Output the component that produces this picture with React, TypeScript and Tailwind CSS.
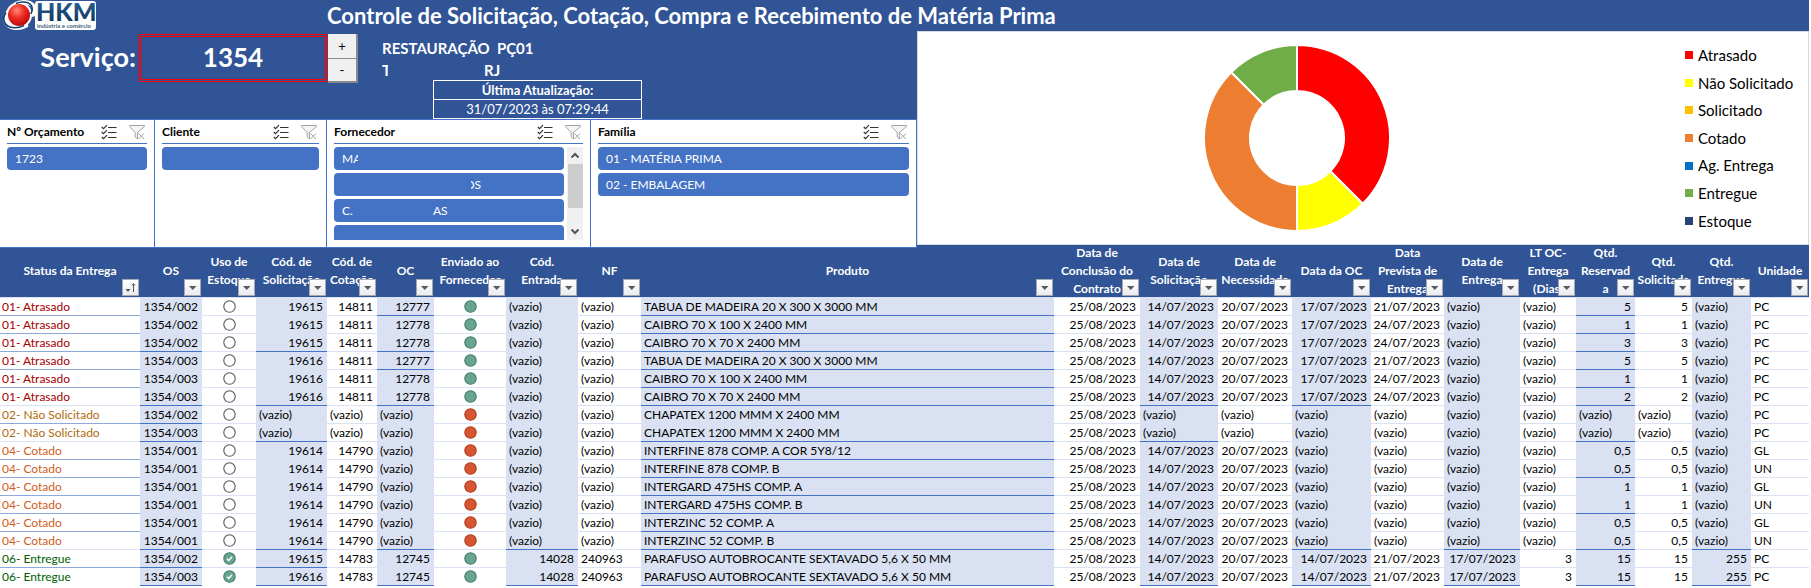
import type { ReactNode } from "react";

type Column = { label: string; width: string; shaded?: boolean; text?: boolean };

const columns: Column[] = [
  { label: "Status da Entrega", width: "w-[140px]" },
  { label: "OS", width: "w-[62px]", shaded: true },
  { label: "Uso de Estoque", width: "w-[54px]" },
  { label: "Cód. de Solicitação", width: "w-[71px]", shaded: true },
  { label: "Cód. de Cotação", width: "w-[50px]" },
  { label: "OC", width: "w-[57px]", shaded: true },
  { label: "Enviado ao Fornecedor", width: "w-[72px]" },
  { label: "Cód. Entrada", width: "w-[72px]", shaded: true },
  { label: "NF", width: "w-[63px]", text: true },
  { label: "Produto", width: "", shaded: true, text: true },
  { label: "Data de Conclusão do Contrato", width: "w-[86px]" },
  { label: "Data de Solicitação", width: "w-[78px]", shaded: true },
  { label: "Data de Necessidade", width: "w-[74px]" },
  { label: "Data da OC", width: "w-[79px]", shaded: true },
  { label: "Data Prevista de Entrega", width: "w-[73px]" },
  { label: "Data de Entrega", width: "w-[76px]", shaded: true },
  { label: "LT OC-Entrega (Dias)", width: "w-[56px]" },
  { label: "Qtd. Reservada", width: "w-[59px]", shaded: true },
  { label: "Qtd. Solicitada", width: "w-[57px]" },
  { label: "Qtd. Entregue", width: "w-[59px]", shaded: true },
  { label: "Unidade", width: "w-[58px]", text: true },
];

const headerLines: Record<number, string[]> = {
  2: ["Uso de", "Estoque"],
  3: ["Cód. de", "Solicitação"],
  4: ["Cód. de", "Cotação"],
  6: ["Enviado ao", "Fornecedor"],
  7: ["Cód.", "Entrada"],
  10: ["Data de", "Conclusão do", "Contrato"],
  11: ["Data de", "Solicitação"],
  12: ["Data de", "Necessidade"],
  14: ["Data", "Prevista de", "Entrega"],
  15: ["Data de", "Entrega"],
  16: ["LT OC-", "Entrega", "(Dias)"],
  17: ["Qtd.", "Reservad", "a"],
  18: ["Qtd.", "Solicitada"],
  19: ["Qtd.", "Entregue"],
};

const V = "(vazio)";
const late = (os: string, sol: string, oc: string, product: string, due: string, qty: string) => [
  "01- Atrasado", os, "empty", sol, "14811", oc, "green", V, V, product,
  "25/08/2023", "14/07/2023", "20/07/2023", "17/07/2023", due, V, V, qty, qty, V, "PC",
];
const pending = (os: string) => [
  "02- Não Solicitado", os, "empty", V, V, V, "red", V, V, "CHAPATEX 1200 MMM X 2400 MM",
  "25/08/2023", V, V, V, V, V, V, V, V, V, "PC",
];
const quoted = (product: string, qty: string, unit: string) => [
  "04- Cotado", "1354/001", "empty", "19614", "14790", V, "red", V, V, product,
  "25/08/2023", "14/07/2023", "20/07/2023", V, V, V, V, qty, qty, V, unit,
];
const delivered = (os: string, sol: string) => [
  "06- Entregue", os, "check", sol, "14783", "12745", "green", "14028", "240963",
  "PARAFUSO AUTOBROCANTE SEXTAVADO 5,6 X 50 MM",
  "25/08/2023", "14/07/2023", "20/07/2023", "14/07/2023", "21/07/2023", "17/07/2023", "3", "15", "15", "255", "PC",
];

const rows = [
  late("1354/002", "19615", "12777", "TABUA DE MADEIRA 20 X 300 X 3000 MM", "21/07/2023", "5"),
  late("1354/002", "19615", "12778", "CAIBRO 70 X 100 X 2400 MM", "24/07/2023", "1"),
  late("1354/002", "19615", "12778", "CAIBRO 70 X 70 X 2400 MM", "24/07/2023", "3"),
  late("1354/003", "19616", "12777", "TABUA DE MADEIRA 20 X 300 X 3000 MM", "21/07/2023", "5"),
  late("1354/003", "19616", "12778", "CAIBRO 70 X 100 X 2400 MM", "24/07/2023", "1"),
  late("1354/003", "19616", "12778", "CAIBRO 70 X 70 X 2400 MM", "24/07/2023", "2"),
  pending("1354/002"),
  pending("1354/003"),
  quoted("INTERFINE 878 COMP. A COR 5Y8/12", "0,5", "GL"),
  quoted("INTERFINE 878 COMP. B", "0,5", "UN"),
  quoted("INTERGARD 475HS COMP. A", "1", "GL"),
  quoted("INTERGARD 475HS COMP. B", "1", "UN"),
  quoted("INTERZINC 52 COMP. A", "0,5", "GL"),
  quoted("INTERZINC 52 COMP. B", "0,5", "UN"),
  delivered("1354/002", "19615"),
  delivered("1354/003", "19616"),
];

const statusColors: Record<string, string> = {
  "01": "text-[#a50000]",
  "02": "text-[#b06a10]",
  "04": "text-[#d0601c]",
  "06": "text-[#006100]",
};

function StatusDot({ kind }: { kind: string }) {
  const fill = kind === "green" || kind === "check" ? "#68a490" : kind === "red" ? "#d65532" : "#fff";
  const stroke = kind === "green" || kind === "check" ? "#3f7f69" : kind === "red" ? "#b03c1c" : "#5a5a5a";
  return (
    <svg viewBox="0 0 13 13" className="mx-auto block size-[13px]" role="img" aria-label={kind}>
      <circle cx="6.5" cy="6.5" r="5.7" fill={fill} stroke={stroke} strokeWidth="1.1" />
      {kind === "check" && <path d="M4 6.7 5.8 8.4 9 4.8" fill="none" stroke="#fff" strokeWidth="1.4" />}
    </svg>
  );
}

function FilterButton({ label, sorted }: { label: string; sorted?: boolean }) {
  return (
    <button
      type="button"
      aria-label={`Filtrar ${label}`}
      className="absolute right-px bottom-px flex size-[17px] items-center justify-center border border-[#a6a9b0] bg-gradient-to-b from-white to-[#e9ebf0]"
    >
      {sorted ? (
        <svg viewBox="0 0 15 15" className="size-[15px] shrink-0">
          <path d="M2.500 9h5l-2.500 3z" fill="#555" />
          <path d="M10.500 12V4M9 5.500l1.500-2 1.500 2" stroke="#555" fill="none" />
        </svg>
      ) : (
        <svg viewBox="0 0 15 15" className="size-[15px] shrink-0">
          <path d="M4 6h7.500L7.750 10z" fill="#5a5a5a" />
        </svg>
      )}
    </button>
  );
}

function Slicer({ title, className, children }: { title: string; className: string; children?: ReactNode }) {
  return (
    <section className={`flex flex-col border-t border-r border-[#4472c4] bg-white pr-[7px] pl-[7px] ${className}`}>
      <header className="flex h-[24px] items-center border-b border-[#4472c4]">
        <h2 className="flex-1 text-[12px] font-bold text-black">{title}</h2>
        <button type="button" aria-label={`Seleção múltipla: ${title}`}>
          <svg viewBox="0 0 16 16" className="size-4" fill="none" stroke="#333" strokeWidth="1.2">
            <path d="M.8 3l1.700 1.700L6 1.200M.8 8l1.700 1.700L6 6.200M.8 13l1.700 1.700L6 11.200M7 3.500h8.500M7 8.500h8.500M7 13.500h8.500" />
          </svg>
        </button>
        <button type="button" aria-label={`Limpar filtro: ${title}`} className="ml-3 mr-[2px]">
          <svg viewBox="0 0 16 16" className="size-4" fill="none" stroke="#a3a3a3">
            <path d="M.5 1.500h15L10 8H6z" fill="#f2f2f2" stroke="none" />
            <path d="M15.500 1.500H.5v1.200L6.200 8.500V13l2.300 2V8.500L15.500 2.500z" fill="#f4f4f4" />
            <path d="M9.500 9.500l5.500 5.500M15 9.500L9.500 15" />
          </svg>
        </button>
      </header>
      {children}
    </section>
  );
}

function SlicerItem({ children, label }: { children?: ReactNode; label?: string }) {
  return (
    <button
      type="button"
      aria-label={label}
      className="flex h-[23px] w-full shrink-0 items-center rounded bg-[#4472c4] px-2 text-left text-[12px] text-white"
    >
      {children}
    </button>
  );
}

const chart = [
  { name: "Atrasado", value: 6, color: "#ff0000" },
  { name: "Não Solicitado", value: 2, color: "#ffff00" },
  { name: "Solicitado", value: 0, color: "#ffc000" },
  { name: "Cotado", value: 6, color: "#ed7d31" },
  { name: "Ag. Entrega", value: 0, color: "#0070c0" },
  { name: "Entregue", value: 2, color: "#70ad47" },
  { name: "Estoque", value: 0, color: "#264478" },
];

function Donut() {
  const total = chart.reduce((sum, s) => sum + s.value, 0);
  let angle = 0;
  const at = (r: number, a: number) => `${94 + r * Math.sin(a)} ${94 - r * Math.cos(a)}`;
  return (
    <svg viewBox="0 0 188 188" className="size-[188px]" role="img" aria-label="Distribuição por status">
      {chart
        .filter((s) => s.value > 0)
        .map((s) => {
          const start = angle;
          angle += (s.value / total) * Math.PI * 2;
          return (
            <path
              key={s.name}
              d={`M${at(93, start)}A93 93 0 0 1 ${at(93, angle)}L${at(47, angle)}A47 47 0 0 0 ${at(47, start)}Z`}
              fill={s.color}
              stroke="#fff"
              strokeWidth="2"
            />
          );
        })}
    </svg>
  );
}

function Logo() {
  return (
    <svg viewBox="0 0 96 32" className="h-8 w-24 overflow-visible" role="img" aria-label="HKM indústria e comércio">
      <defs>
        <radialGradient id="ball" cx="40%" cy="30%" r="70%">
          <stop offset="0" stopColor="#ff8a78" />
          <stop offset="0.500" stopColor="#ee2a20" />
          <stop offset="1" stopColor="#b80d0d" />
        </radialGradient>
        <linearGradient id="ink" x1="0" y1="0" x2="0" y2="1">
          <stop offset="0" stopColor="#2d6da3" />
          <stop offset="1" stopColor="#0b2c52" />
        </linearGradient>
      </defs>
      <path d="M6 12.500C1.500 18 3 25 10 27c5 1.500 10 .5 14-1.500M14 4c7-3 16-2 18 3.500 1 3 0 5-1 7" fill="none" stroke="#fff" strokeWidth="4.500" strokeLinecap="round" />
      <rect x="33" y="1" width="61" height="29" rx="3" fill="#fff" />
      <circle cx="17" cy="15" r="13" fill="#fff" />
      <path d="M4 12.500C0 18 1.500 25 8 27c5 1.500 10 .5 14-1.500M14 3.500c7-3 14-1.500 16 3.500 1 3 0 5-1 7" fill="none" stroke="#173f6b" strokeWidth="1.600" />
      <circle cx="17" cy="15" r="11" fill="url(#ball)" />
      <text x="34" y="21" fontSize="25" fontWeight="900" fill="url(#ink)" fontFamily="Lato, sans-serif">HKM</text>
      <text x="35" y="28" fontSize="6" fontWeight="700" fill="#46627f" fontFamily="Lato, sans-serif">indústria e comércio</text>
    </svg>
  );
}

export default function App() {
  return (
    <main className="bg-white pr-[2px] pb-[2px] font-['Lato',sans-serif] text-black">
      <header className="flex h-[31px] items-center bg-[#305496]">
        <div className="w-[327px] pl-[2px]">
          <Logo />
        </div>
        <h1 className="text-[22px] leading-[30px] font-bold whitespace-nowrap text-white">
          Controle de Solicitação, Cotação, Compra e Recebimento de Matéria Prima
        </h1>
      </header>

      <div className="flex bg-[#305496]">
        <div className="w-[917px] shrink-0">
          <div className="flex h-[88px] items-start pt-[3px] text-white">
            <label htmlFor="service" className="w-[139px] pr-[3px] text-right text-[27px] leading-[46px] font-bold">
              Serviço:
            </label>
            <input
              id="service"
              defaultValue="1354"
              className="h-[48px] w-[188px] border-3 border-double border-[#ff0000] bg-transparent pb-[2px] text-center text-[26px] font-bold"
            />
            <div className="ml-px flex w-[30px] flex-col text-[13px] leading-4 text-black">
              <button type="button" className="h-[25px] border-r-2 border-b border-[#8a8a8a] bg-[#f0f0f0]">+</button>
              <button type="button" className="h-[24px] border-r-2 border-b-2 border-[#8a8a8a] bg-[#f0f0f0]">-</button>
            </div>
            <div className="pl-6 text-[15px] font-bold">
              <p className="pt-[3px] leading-[22px] whitespace-pre">RESTAURAÇÃO  PÇ01</p>
              <p className="flex gap-[96px] leading-[22px]">
                <span className="w-[6px] overflow-hidden">T</span>
                <span>RJ</span>
              </p>
              <dl className="ml-[51px] -mt-px w-[209px] border border-white text-center text-[13px] leading-[18px]">
                <dt className="border-b border-white">Última Atualização:</dt>
                <dd className="font-normal">31/07/2023 às 07:29:44</dd>
              </dl>
            </div>
          </div>

          <div className="flex h-[129px] border-b border-[#4472c4] bg-white">
            <Slicer title="Nº Orçamento" className="w-[155px]">
              <div className="pt-[3px]">
                <SlicerItem>1723</SlicerItem>
              </div>
            </Slicer>
            <Slicer title="Cliente" className="w-[172px]">
              <div className="pt-[3px]">
                <SlicerItem label="Cliente selecionado" />
              </div>
            </Slicer>
            <Slicer title="Fornecedor" className="w-[264px]">
              <div className="mt-[3px] flex h-[93px] gap-[3px] overflow-hidden">
                <div className="flex flex-1 flex-col gap-[3px]">
                  <SlicerItem>
                    <span className="w-4 overflow-hidden">MA</span>
                  </SlicerItem>
                  <SlicerItem label="Fornecedor 2">
                    <span className="ml-[129px] flex w-[10px] justify-end overflow-hidden">OS</span>
                  </SlicerItem>
                  <SlicerItem>
                    <span className="w-[91px]">C.</span>
                    <span>AS</span>
                  </SlicerItem>
                  <SlicerItem label="Fornecedor 4" />
                </div>
                <div className="flex w-4 flex-col items-center justify-between bg-[#f0f0f0]">
                  <svg viewBox="0 0 16 17" className="h-[17px] w-4">
                    <path d="M4.500 10.500L8 7l3.500 3.500" fill="none" stroke="#555" strokeWidth="2" />
                  </svg>
                  <div className="mb-auto h-[44px] w-[15px] bg-[#cdcdcd]" />
                  <svg viewBox="0 0 16 17" className="h-[17px] w-4">
                    <path d="M4.500 6.500L8 10l3.500-3.500" fill="none" stroke="#555" strokeWidth="2" />
                  </svg>
                </div>
              </div>
            </Slicer>
            <Slicer title="Família" className="flex-1">
              <div className="flex flex-col gap-[3px] pt-[3px]">
                <SlicerItem>01 - MATÉRIA PRIMA</SlicerItem>
                <SlicerItem>02 - EMBALAGEM</SlicerItem>
              </div>
            </Slicer>
          </div>
        </div>

        <section className="mb-[3px] flex flex-1 items-center justify-between border border-[#d9d9d9] bg-white">
          <div className="flex flex-1 justify-center pr-[9px]">
            <Donut />
          </div>
          <ul className="flex h-[193px] w-[123px] flex-col text-[15px]">
            {chart.map((s) => (
              <li key={s.name} className="flex flex-1 items-center gap-[5px] whitespace-nowrap">
                <span className="size-2" style={{ backgroundColor: s.color }} />
                {s.name}
              </li>
            ))}
          </ul>
        </section>
      </div>

      <table className="w-full table-fixed border-separate border-spacing-0 text-[12px]">
        <colgroup>
          {columns.map((c, i) => (
            <col key={i} className={c.width} />
          ))}
        </colgroup>
        <thead>
          <tr className="bg-[#305496] text-white">
            {columns.map((c, i) => (
              <th key={i} className="relative h-[50px] border-b border-[#d9e1f2] p-0 text-center align-middle font-bold">
                <div className="-mt-[4px] flex h-[53px] flex-col justify-center leading-[18px] whitespace-nowrap">
                  {(headerLines[i] ?? [c.label]).map((line) => (
                    <span key={line} className="flex justify-center">{line}</span>
                  ))}
                </div>
                <FilterButton label={c.label} sorted={i === 0} />
              </th>
            ))}
          </tr>
        </thead>
        <tbody>
          {rows.map((row, r) => (
            <tr key={r}>
              {row.map((value, c) => {
                const col = columns[c];
                const changes = rows[r + 1]?.[c] !== value;
                const last = r === rows.length - 1;
                const icon = c === 2 || c === 6;
                const line = col.shaded
                  ? changes ? "border-[#4472c4]" : "border-[#d9e1f2]"
                  : last ? "border-white" : c === 0 && !changes ? "border-[#8ea9db]" : "border-[#d9e1f2]";
                const align = c === 0
                  ? `pl-[2px] ${statusColors[value.slice(0, 2)]}`
                  : icon ? "" : col.text || value === V ? "pl-[3px] text-left" : "pr-1 text-right";
                return (
                  <td
                    key={c}
                    className={`h-[18px] border-b p-0 leading-[17px] whitespace-nowrap ${line} ${col.shaded ? "bg-[#d9e1f2]" : "bg-white"} ${align}`}
                  >
                    {icon ? <StatusDot kind={value} /> : value}
                  </td>
                );
              })}
            </tr>
          ))}
        </tbody>
      </table>
    </main>
  );
}
